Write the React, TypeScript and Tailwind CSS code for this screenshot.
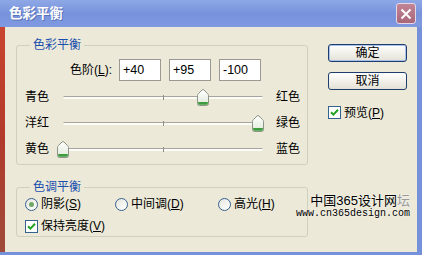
import React from 'react'

const font = "font-['Liberation_Sans','Noto_Sans_CJK_SC',sans-serif]"

function Thumb({ value }: { value: number }) {
  const left = ((value + 100) / 200) * 200 - 6
  return (
    <svg
      width="12"
      height="17"
      viewBox="0 0 12 17"
      className="absolute top-[-8px]"
      style={{ left }}
    >
      <defs>
        <linearGradient id="tg" x1="0" y1="0" x2="0" y2="1">
          <stop offset="0" stopColor="#ffffff" />
          <stop offset="1" stopColor="#dfe9d8" />
        </linearGradient>
      </defs>
      <path
        d="M0.5 6.5 Q0.5 5.5 1.5 4.5 L5 1 Q6 0 7 1 L10.5 4.5 Q11.5 5.5 11.5 6.5 V14.5 Q11.5 16.5 9.5 16.5 H2.5 Q0.5 16.5 0.5 14.5 Z"
        fill="url(#tg)"
        stroke="#8c9488"
      />
      <path d="M1.2 13 H10.8 V14.6 Q10.8 15.8 9.5 15.8 H2.5 Q1.2 15.8 1.2 14.6 Z" fill="#3d9c3d" />
    </svg>
  )
}

function SliderRow({ left, right, value }: { left: string; right: string; value: number }) {
  return (
    <div className="flex h-[26px] items-center pl-[8px]">
      <span className="w-[38px] text-[12px] leading-none text-black">{left}</span>
      <div className="relative h-[3px] w-[200px] rounded-full border-t border-[#a6a69e] bg-[#fbfbf8]">
        <div className="absolute left-[100px] top-[-2px] h-[5px] w-[1px] bg-[#8e8e86]" />
        <Thumb value={value} />
      </div>
      <span className="ml-[13px] text-[12px] leading-none text-black">{right}</span>
    </div>
  )
}

function Radio({ checked }: { checked?: boolean }) {
  return (
    <span className="flex h-[13px] w-[13px] items-center justify-center rounded-full border border-[#35618f] bg-gradient-to-br from-[#e6e6df] to-white">
      {checked && <span className="h-[5px] w-[5px] rounded-full bg-[#6fa866]" />}
    </span>
  )
}

function Check() {
  return (
    <span className="flex h-[13px] w-[13px] items-center justify-center border border-[#35618f] bg-white">
      <svg width="9" height="9" viewBox="0 0 9 9">
        <path d="M1 4.2 L3.4 6.6 L8 1.8" fill="none" stroke="#21a121" strokeWidth="2" />
      </svg>
    </span>
  )
}

function Group({ title, children, className }: { title: string; children: React.ReactNode; className: string }) {
  return (
    <div className={`relative rounded-[3px] border border-[#cfcfc2] ${className}`}>
      <span className="absolute left-[13px] top-[-9px] bg-[#ece9d8] px-[3px] text-[12px] leading-[16px] text-[#1a4fae]">
        {title}
      </span>
      {children}
    </div>
  )
}

export default function App() {
  return (
    <div className={`relative flex h-[255px] w-[422px] flex-col overflow-hidden bg-[#7591da] ${font}`}>
      {/* Title bar */}
      <div className="flex h-[27px] items-center justify-between bg-gradient-to-b from-[#8ea8e6] via-[#7893db] to-[#7f9ae0] pl-[9px] pr-[6px]">
        <span className="text-[13.5px] font-bold leading-none text-white [text-shadow:1px_1px_0_#5a72b8]">色彩平衡</span>
        <span className="flex h-[21px] w-[20px] items-center justify-center rounded-[3px] border border-[#e4d8e6] bg-gradient-to-b from-[#c28595] to-[#a9677a]">
          <svg width="12" height="12" viewBox="0 0 12 12">
            <path d="M1.5 1.5 L10.5 10.5 M10.5 1.5 L1.5 10.5" stroke="#ffffff" strokeWidth="2" />
          </svg>
        </span>
      </div>

      <div className="flex h-[225px]">
        <div className="w-[5px] bg-gradient-to-b from-[#c9452f] via-[#b23a2c] to-[#9e4a3a]" />
        <div className="flex w-[412px] bg-[#ece9d8]">
          {/* Left column */}
          <div className="ml-[11px] flex w-[292px] flex-col">
            <Group title="色彩平衡" className="mt-[18px] h-[120px]">
              <div className="mt-[13px] flex h-[22px] items-center">
                <span className="w-[95px] text-right text-[12px] leading-none text-black">
                  色阶(<span className="underline">L</span>):
                </span>
                <div className="ml-[7px] flex gap-[8px]">
                  {['+40', '+95', '-100'].map((v) => (
                    <div
                      key={v}
                      className="flex h-[22px] w-[42px] items-center border border-[#9a9a92] bg-white pl-[3px] text-[12.5px] leading-none text-black"
                    >
                      {v}
                    </div>
                  ))}
                </div>
              </div>
              <div className="mt-[3px]">
                <SliderRow left="青色" right="红色" value={40} />
                <SliderRow left="洋红" right="绿色" value={95} />
                <SliderRow left="黄色" right="蓝色" value={-100} />
              </div>
            </Group>

            <Group title="色调平衡" className="mt-[22px] h-[50px]">
              <div className="mt-[8px] flex h-[16px] items-center pl-[8px] text-[12px] leading-none text-black">
                <span className="flex w-[90px] items-center gap-[3px]">
                  <Radio checked />
                  <span>
                    阴影(<span className="underline">S</span>)
                  </span>
                </span>
                <span className="flex w-[103px] items-center gap-[3px]">
                  <Radio />
                  <span>
                    中间调(<span className="underline">D</span>)
                  </span>
                </span>
                <span className="flex items-center gap-[3px]">
                  <Radio />
                  <span>
                    高光(<span className="underline">H</span>)
                  </span>
                </span>
              </div>
              <div className="mt-[6px] flex h-[16px] items-center gap-[3px] pl-[8px] text-[12px] leading-none text-black">
                <Check />
                <span>
                  保持亮度(<span className="underline">V</span>)
                </span>
              </div>
            </Group>
          </div>

          {/* Right column */}
          <div className="ml-[20px] flex w-[79px] flex-col">
            <button className="mt-[17px] flex h-[18px] items-center justify-center rounded-[3px] border border-[#1f3d6c] bg-gradient-to-b from-white to-[#e4e2d6] text-[12px] leading-none text-black shadow-[inset_0_0_0_1px_#a8c0ea]">
              确定
            </button>
            <button className="mt-[10px] flex h-[18px] items-center justify-center rounded-[3px] border border-[#1f3d6c] bg-gradient-to-b from-white to-[#e4e2d6] text-[12px] leading-none text-black">
              取消
            </button>
            <div className="mt-[16px] flex items-center gap-[3px] text-[12px] leading-none text-black">
              <Check />
              <span>
                预览(<span className="underline">P</span>)
              </span>
            </div>
          </div>
        </div>
        <div className="w-[5px] bg-[#7591da]" />
      </div>

      {/* Watermark */}
      <div className="absolute left-[296px] top-[193px] flex flex-col items-end">
        <span className="text-[13px] leading-[15px] text-black [text-shadow:0_0_2px_#ffffff]">
          中国365设计网<span className="text-[#9a9a9a]">坛</span>
        </span>
        <span className="font-['Liberation_Mono',monospace] text-[10px] leading-[11px] text-black [text-shadow:0_0_2px_#ffffff]">
          www.cn365design.com
        </span>
      </div>
    </div>
  )
}
